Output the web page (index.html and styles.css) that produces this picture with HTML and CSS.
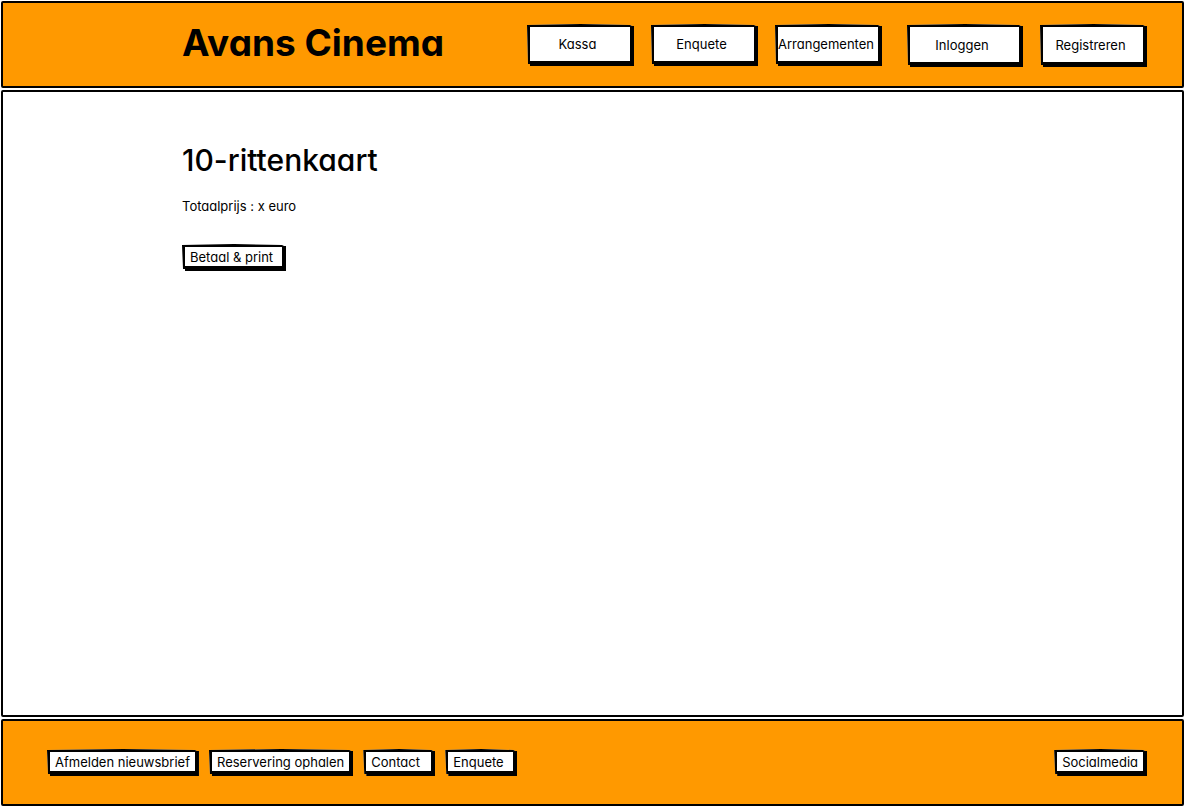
FILE: index.html
```html
<!DOCTYPE html>
<html lang="nl">
<head>
<meta charset="utf-8">
<meta name="viewport" content="width=device-width, initial-scale=1">
<title>Avans Cinema</title>
<link rel="stylesheet" href="styles.css">
</head>
<body>
<div class="page">
  <header class="panel site-header">
    <h1 class="brand">Avans Cinema</h1>
    <nav class="main-nav">
      <button type="button" class="button nav-button">Kassa</button>
      <button type="button" class="button nav-button">Enquete</button>
      <button type="button" class="button nav-button">Arrangementen</button>
      <div class="account">
        <button type="button" class="button nav-button account-button login">Inloggen</button>
        <button type="button" class="button nav-button account-button">Registreren</button>
      </div>
    </nav>
  </header>
  <main class="panel content">
    <h2 class="title">10-rittenkaart</h2>
    <p class="price">Totaalprijs : x euro</p>
    <button type="button" class="button pay">Betaal &amp; print</button>
  </main>
  <footer class="panel site-footer">
    <button type="button" class="button">Afmelden nieuwsbrief</button>
    <button type="button" class="button">Reservering ophalen</button>
    <button type="button" class="button">Contact</button>
    <button type="button" class="button">Enquete</button>
    <button type="button" class="button social">Socialmedia</button>
  </footer>
</div>
</body>
</html>
```
FILE: styles.css
```css
* {
  box-sizing: border-box;
}

body {
  margin: 0;
  background: #fff;
  color: #000;
  font-family: Inter, "Liberation Sans", sans-serif;
  font-feature-settings: "cv11";
  font-size: 13px;
  line-height: 16px;
}

.page {
  display: grid;
  grid-template-rows: auto 1fr auto;
  gap: 2px;
  min-height: 100vh;
  padding: 1px;
}

.panel {
  border: 2px solid #000;
  border-radius: 2px;
}

.site-header {
  display: flex;
  align-items: center;
  justify-content: space-between;
  min-height: 87px;
  padding: 2px 35px 0 179px;
  background: #ff9900;
}

.brand {
  margin: 0 0 6px;
  font-size: 37px;
  line-height: 44px;
  font-weight: 700;
  white-space: nowrap;
}

.main-nav,
.account {
  display: flex;
  gap: 17px;
}

.account {
  margin-left: 8px;
}

/* Hand-drawn box: uneven outline with a hard shadow at the right and bottom. */
.button {
  min-width: 72px;
  min-height: 27px;
  margin: 0;
  padding: 0 5px;
  border: solid #000;
  border-width: 3px 4px 5px 3px;
  border-radius: 0;
  background: #fff;
  color: #000;
  font: inherit;
  font-feature-settings: inherit;
  text-align: left;
  white-space: nowrap;
  clip-path: polygon(0 1px, 50% 0, calc(100% - 4px) 1px, calc(100% - 2px) 2px, 100% 2px, 100% 100%, 3px 100%, 3px calc(100% - 2px), 1px calc(100% - 2px));
}

.nav-button {
  width: 107px;
  height: 42px;
  padding: 0 5px 0 0;
  text-align: center;
}

.account-button {
  height: 43px;
}

.login {
  width: 116px;
}

.content {
  padding: 48px 179px;
}

.title {
  margin: 0 0 18px;
  font-size: 30px;
  line-height: 40px;
  font-weight: 500;
}

.price {
  margin: 0 0 30px;
}

.pay {
  min-width: 104px;
}

.site-footer {
  display: flex;
  align-items: center;
  gap: 10px;
  min-height: 87px;
  padding: 0 35px 0 44px;
  background: #ff9900;
}

.social {
  margin-left: auto;
}
```
